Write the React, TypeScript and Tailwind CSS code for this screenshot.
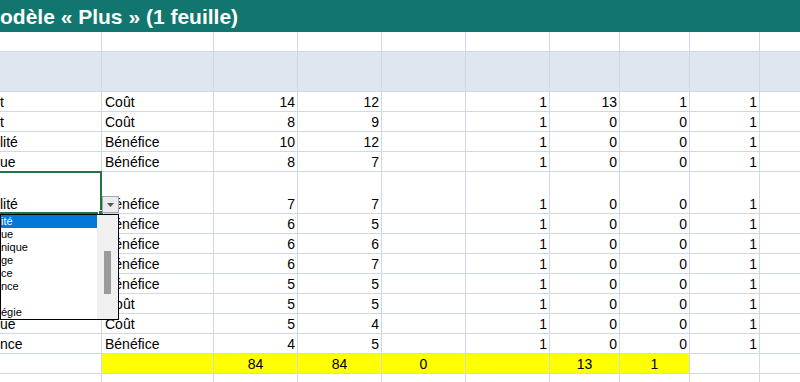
import React from 'react';

type Row = {
  a: string;
  b: string;
  c: number;
  d: number;
  f: number;
  g: number;
  h: number;
  i: number;
  tall?: boolean;
};

const rows: Row[] = [
  { a: 't', b: 'Coût', c: 14, d: 12, f: 1, g: 13, h: 1, i: 1 },
  { a: 't', b: 'Coût', c: 8, d: 9, f: 1, g: 0, h: 0, i: 1 },
  { a: 'lité', b: 'Bénéfice', c: 10, d: 12, f: 1, g: 0, h: 0, i: 1 },
  { a: 'ue', b: 'Bénéfice', c: 8, d: 7, f: 1, g: 0, h: 0, i: 1 },
  { a: 'lité', b: 'Bénéfice', c: 7, d: 7, f: 1, g: 0, h: 0, i: 1, tall: true },
  { a: '', b: 'Bénéfice', c: 6, d: 5, f: 1, g: 0, h: 0, i: 1 },
  { a: '', b: 'Bénéfice', c: 6, d: 6, f: 1, g: 0, h: 0, i: 1 },
  { a: '', b: 'Bénéfice', c: 6, d: 7, f: 1, g: 0, h: 0, i: 1 },
  { a: '', b: 'Bénéfice', c: 5, d: 5, f: 1, g: 0, h: 0, i: 1 },
  { a: '', b: 'Coût', c: 5, d: 5, f: 1, g: 0, h: 0, i: 1 },
  { a: 'ue', b: 'Coût', c: 5, d: 4, f: 1, g: 0, h: 0, i: 1 },
  { a: 'nce', b: 'Bénéfice', c: 4, d: 5, f: 1, g: 0, h: 0, i: 1 },
];

const listItems = ['ité', 'ue', 'nique', 'ge', 'ce', 'nce', '', 'égie'];

const grid =
  'grid grid-cols-[102px_112px_84px_84px_84px_84px_70px_70px_70px_70px] w-[830px]';

function Cell({
  children,
  className = '',
}: {
  children?: React.ReactNode;
  className?: string;
}) {
  return (
    <div
      className={`flex items-end border-r border-b border-[#d0d7e5] leading-[18px] whitespace-nowrap overflow-hidden ${className}`}
    >
      {children}
    </div>
  );
}

export default function App() {
  return (
    <div className="relative w-[800px] h-[382px] overflow-hidden bg-white text-[14px] text-black font-['Liberation_Sans',Arial,sans-serif]">
      {/* Title band */}
      <div className="h-8 bg-[#10766e] flex items-center">
        <h1 className="text-white font-bold text-[21px] leading-none whitespace-nowrap">
          odèle « Plus » (1 feuille)
        </h1>
      </div>

      {/* empty row */}
      <div className={grid}>
        {Array.from({ length: 10 }).map((_, i) => (
          <Cell key={i} className="h-5" />
        ))}
      </div>

      {/* header band */}
      <div className={grid}>
        {Array.from({ length: 10 }).map((_, i) => (
          <Cell key={i} className="h-10 bg-[#dfe6f0]" />
        ))}
      </div>

      {rows.map((r, idx) => {
        const h = r.tall ? 'h-[42px]' : 'h-5';
        const num = `${h} justify-end pr-[2px]`;
        return (
          <div key={idx} className={grid}>
            <Cell className={h}>{r.a}</Cell>
            <Cell className={`${h} pl-[3px]`}>{r.b}</Cell>
            <Cell className={num}>{r.c}</Cell>
            <Cell className={num}>{r.d}</Cell>
            <Cell className={h} />
            <Cell className={num}>{r.f}</Cell>
            <Cell className={num}>{r.g}</Cell>
            <Cell className={num}>{r.h}</Cell>
            <Cell className={num}>{r.i}</Cell>
            <Cell className={h} />
          </div>
        );
      })}

      {/* totals */}
      <div className={grid}>
        <Cell className="h-5" />
        <Cell className="h-5 bg-[#ffff00]" />
        <Cell className="h-5 bg-[#ffff00] justify-center">84</Cell>
        <Cell className="h-5 bg-[#ffff00] justify-center">84</Cell>
        <Cell className="h-5 bg-[#ffff00] justify-center">0</Cell>
        <Cell className="h-5 bg-[#ffff00]" />
        <Cell className="h-5 bg-[#ffff00] justify-center">13</Cell>
        <Cell className="h-5 bg-[#ffff00] justify-center">1</Cell>
        <Cell className="h-5" />
        <Cell className="h-5" />
      </div>
      <div className={grid}>
        {Array.from({ length: 10 }).map((_, i) => (
          <Cell key={i} className="h-5" />
        ))}
      </div>

      {/* active cell outline */}
      <div className="absolute left-[-3px] top-[171px] w-[105px] h-[43px] border-2 border-[#217346]" />
      <div className="absolute left-[98px] top-[210px] w-[6px] h-[6px] bg-[#217346] border border-white" />

      {/* dropdown arrow button */}
      <div className="absolute left-[102px] top-[196px] w-[17px] h-[17px] border border-[#a6a6a6] bg-[#ececec] flex items-center justify-center">
        <svg width="7" height="4" viewBox="0 0 7 4">
          <path d="M0 0H7L3.5 4Z" fill="#555" />
        </svg>
      </div>

      {/* validation list */}
      <div className="absolute left-0 top-[214px] w-[119px] h-[106px] border border-black bg-white flex text-[11px] font-['Liberation_Sans',Arial,sans-serif]">
        <div className="w-[96px] flex flex-col">
          {listItems.map((t, i) => (
            <div
              key={i}
              className={`h-[13px] leading-[13px] overflow-hidden whitespace-nowrap ${
                i === 0 ? 'bg-[#0078d7] text-white' : 'text-black'
              }`}
            >
              {t}
            </div>
          ))}
        </div>
        <div className="flex-1 bg-[#f0f0f0] pt-[36px] pl-[7px]">
          <div className="w-[7px] h-[43px] bg-[#9a9a9a]" />
        </div>
      </div>
    </div>
  );
}
